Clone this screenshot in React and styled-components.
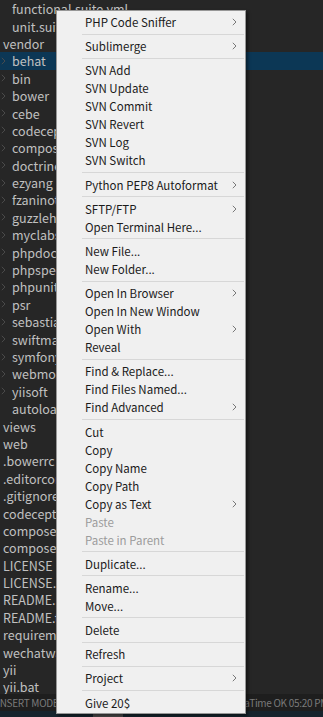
import styled, { createGlobalStyle } from "styled-components";

const Global = createGlobalStyle`
  html, body {
    margin: 0;
    padding: 0;
    background: #262626;
  }
  body {
    font-family: "Noto Sans CJK SC", "Noto Sans", sans-serif;
  }
`;

const tree = [
  { name: "functional.suite.yml", depth: 1 },
  { name: "unit.suite.yml", depth: 1 },
  { name: "vendor", depth: 0 },
  { name: "behat", depth: 1, folder: true, selected: true },
  { name: "bin", depth: 1, folder: true },
  { name: "bower", depth: 1, folder: true },
  { name: "cebe", depth: 1, folder: true },
  { name: "codeception", depth: 1, folder: true },
  { name: "composer", depth: 1, folder: true },
  { name: "doctrine", depth: 1, folder: true },
  { name: "ezyang", depth: 1, folder: true },
  { name: "fzaninotto", depth: 1, folder: true },
  { name: "guzzlehttp", depth: 1, folder: true },
  { name: "myclabs", depth: 1, folder: true },
  { name: "phpdocumentor", depth: 1, folder: true },
  { name: "phpspec", depth: 1, folder: true },
  { name: "phpunit", depth: 1, folder: true },
  { name: "psr", depth: 1, folder: true },
  { name: "sebastian", depth: 1, folder: true },
  { name: "swiftmailer", depth: 1, folder: true },
  { name: "symfony", depth: 1, folder: true },
  { name: "webmozart", depth: 1, folder: true },
  { name: "yiisoft", depth: 1, folder: true },
  { name: "autoload.php", depth: 1 },
  { name: "views", depth: 0 },
  { name: "web", depth: 0 },
  { name: ".bowerrc", depth: 0 },
  { name: ".editorconfig", depth: 0 },
  { name: ".gitignore", depth: 0 },
  { name: "codeception.yml", depth: 0 },
  { name: "composer.json", depth: 0 },
  { name: "composer.lock", depth: 0 },
  { name: "LICENSE", depth: 0 },
  { name: "LICENSE.md", depth: 0 },
  { name: "README.md", depth: 0 },
  { name: "README.txt", depth: 0 },
  { name: "requirements.php", depth: 0 },
  { name: "wechatwall.sql", depth: 0 },
  { name: "yii", depth: 0 },
  { name: "yii.bat", depth: 0 },
];

// "-" marks a separator
const menu = [
  { label: "PHP Code Sniffer", sub: true },
  "-",
  { label: "Sublimerge", sub: true },
  "-",
  { label: "SVN Add" },
  { label: "SVN Update" },
  { label: "SVN Commit" },
  { label: "SVN Revert" },
  { label: "SVN Log" },
  { label: "SVN Switch" },
  "-",
  { label: "Python PEP8 Autoformat", sub: true },
  "-",
  { label: "SFTP/FTP", sub: true },
  { label: "Open Terminal Here..." },
  "-",
  { label: "New File..." },
  { label: "New Folder..." },
  "-",
  { label: "Open In Browser", sub: true },
  { label: "Open In New Window" },
  { label: "Open With", sub: true },
  { label: "Reveal" },
  "-",
  { label: "Find & Replace..." },
  { label: "Find Files Named..." },
  { label: "Find Advanced", sub: true },
  "-",
  { label: "Cut" },
  { label: "Copy" },
  { label: "Copy Name" },
  { label: "Copy Path" },
  { label: "Copy as Text", sub: true },
  { label: "Paste", disabled: true },
  { label: "Paste in Parent", disabled: true },
  "-",
  { label: "Duplicate..." },
  "-",
  { label: "Rename..." },
  { label: "Move..." },
  "-",
  { label: "Delete" },
  "-",
  { label: "Refresh" },
  "-",
  { label: "Project", sub: true },
  "-",
  { label: "Give 20$" },
];

function Chevron({ color }) {
  return (
    <svg width="5" height="8" viewBox="0 0 5 8">
      <polyline points="0.8,0.8 4,4 0.8,7.2" fill="none" stroke={color} strokeWidth="0.9" />
    </svg>
  );
}

function App() {
  return (
    <>
      <Global />
      <Screen>
        <Tree>
          {tree.map((row) => (
            <Row key={row.name} $selected={row.selected}>
              {row.depth > 0 && (
                <Indent>{row.folder && <Chevron color="#4e4e4e" />}</Indent>
              )}
              <Name>{row.name}</Name>
            </Row>
          ))}
        </Tree>
        <StatusBar>
          <span>INSERT MODE, Line 1, Column 1</span>
          <StatusRight>WakaTime OK 05:20 PM</StatusRight>
        </StatusBar>
        <BottomStrip>
          <Thumb />
        </BottomStrip>

        <Menu>
          {menu.map((item, i) =>
            item === "-" ? (
              <Separator key={i} />
            ) : (
              <Item key={i} $disabled={item.disabled}>
                <span>{item.label}</span>
                {item.sub && <Chevron color="#6a6a6a" />}
              </Item>
            )
          )}
        </Menu>
      </Screen>
    </>
  );
}

export default App;

const Screen = styled.div`
  position: relative;
  width: 323px;
  height: 717px;
  overflow: hidden;
  display: flex;
  flex-direction: column;
  background: #262626;
`;

const Tree = styled.div`
  height: 694px;
  overflow: hidden;
`;

const Row = styled.div`
  height: 17.4px;
  display: flex;
  align-items: center;
  padding-left: 3px;
  background: ${(p) => (p.$selected ? "#0c3755" : "transparent")};
  color: #c0c0c0;
  font-size: 12.5px;
  white-space: nowrap;
`;

const Indent = styled.div`
  width: 9px;
  display: flex;
  align-items: center;
  margin-left: -2px;
  margin-right: 2px;
`;

const Name = styled.span`
  line-height: 17px;
`;

const StatusBar = styled.div`
  height: 17px;
  display: flex;
  align-items: center;
  justify-content: space-between;
  background: #1e1e1e;
  color: #7a7a7a;
  font-size: 10px;
  letter-spacing: -0.3px;
  white-space: nowrap;
  margin-left: -3px;
`;

const StatusRight = styled.span`
  margin-right: -5px;
`;

const BottomStrip = styled.div`
  height: 6px;
  background: #16242d;
  display: flex;
  padding-left: 93px;
`;

const Thumb = styled.div`
  width: 30px;
  height: 6px;
  background: #4a4a4a;
`;

const Menu = styled.div`
  position: absolute;
  left: 56px;
  top: 10px;
  width: 188px;
  padding: 2px 0 1px;
  background: #f0f0f0;
  border: 1px solid #979797;
  box-shadow: 2px 2px 3px rgba(0, 0, 0, 0.45);
  font-size: 11.5px;
  color: #1a1a1a;
`;

const Item = styled.div`
  height: 18px;
  display: flex;
  align-items: center;
  justify-content: space-between;
  padding-left: 28px;
  padding-right: 8px;
  color: ${(p) => (p.$disabled ? "#9c9c9c" : "#1a1a1a")};
  white-space: nowrap;
`;

const Separator = styled.div`
  height: 1px;
  margin: 2.6px 1px 2.6px 25px;
  background: #d7d7d7;
`;
